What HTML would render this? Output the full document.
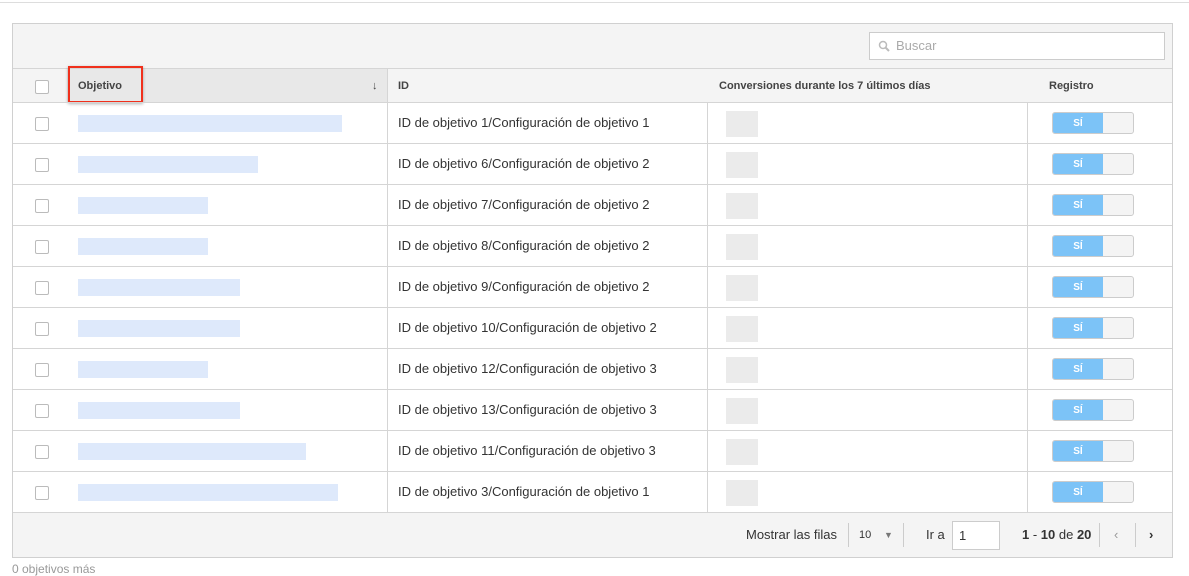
<!DOCTYPE html><html><head><style>
body{margin:0;width:1189px;height:572px;overflow:hidden;background:#fff;font-family:"Liberation Sans",sans-serif;position:relative}
.a{position:absolute}
.tbl{left:12px;top:23px;width:1159px;height:533px;border:1px solid #d0d0d0;background:#fff}
.row{position:absolute;left:0;width:1159px;height:40px;border-top:1px solid #d5d5d5;font-size:13px;color:#333}
.cb{position:absolute;left:22px;width:12px;height:12px;border:1px solid #bbb;border-radius:2px;background:#fff}
.vl{position:absolute;top:0;bottom:0;width:1px;background:#d5d5d5}
.tg{position:absolute;left:1039px;top:9px;width:80px;height:20px;border:1px solid #ccc;border-radius:3px;background:#f4f4f4;overflow:hidden}
.tg b{display:block;width:50px;height:20px;background:#7cc3f7;color:#fff;font-size:10px;text-align:center;line-height:21px}
.bl{position:absolute;background:#d6e3fa}
.gr{position:absolute;background:#e6e6e6}
</style></head><body>
<div class="a" style="left:0;top:2px;width:1189px;height:1px;background:#ddd"></div>
<div class="a tbl">
 <div class="a" style="left:0;top:0;width:1159px;height:44px;background:#f4f4f4"></div>
 <div class="a" style="left:856px;top:8px;width:294px;height:26px;border:1px solid #ccc;background:#fff;font-size:13px;color:#aaa;line-height:26px">
  <svg class="a" style="left:8px;top:7px" width="12" height="12" viewBox="0 0 12 12"><circle cx="5" cy="5" r="3.5" fill="none" stroke="#bbb" stroke-width="1.5"/><path d="M7.5 7.5L11 11" stroke="#bbb" stroke-width="2"/></svg>
  <span style="position:absolute;left:26px">Buscar</span></div>
 <div class="row" style="top:44px;height:33px;background:#f4f4f4;font-size:11px;font-weight:bold;color:#444;line-height:35px">
  <div class="cb" style="top:11px"></div>
  <div class="a" style="left:54px;top:0;width:320px;height:33px;background:#e8e8e8"></div>
  <span class="a" style="left:65px">Objetivo</span><span class="a" style="left:359px">↓</span>
  <div class="vl" style="left:374px"></div>
  <span class="a" style="left:385px">ID</span>
  <span class="a" style="left:706px">Conversiones durante los 7 últimos días</span>
  <span class="a" style="left:1036px">Registro</span>
 </div>
 <div class="a" style="left:55px;top:42px;width:71px;height:33px;border:2px solid #f0301c;box-shadow:0 1px 3px rgba(0,0,0,.3)"></div>
 <div id="rows"></div>
 <div class="row" style="top:488px;height:44px;background:#f4f4f4;font-size:13px;line-height:44px">
  <span class="a" style="left:733px">Mostrar las filas</span>
  <div class="vl" style="left:835px;top:10px;bottom:10px;background:#ccc"></div>
  <span class="a" style="left:846px;font-size:11px">10</span><span class="a" style="left:871px;font-size:9px;color:#777">▼</span>
  <div class="vl" style="left:890px;top:10px;bottom:10px;background:#ccc"></div>
  <span class="a" style="left:913px">Ir a</span>
  <div class="a" style="left:939px;top:8px;width:46px;height:27px;border:1px solid #ccc;background:#fff;line-height:27px;text-indent:6px">1</div>
  <span class="a" style="left:1009px"><b>1</b> - <b>10</b> de <b>20</b></span>
  <div class="vl" style="left:1086px;top:10px;bottom:10px;background:#ccc"></div>
  <span class="a" style="left:1101px;color:#999">‹</span>
  <div class="vl" style="left:1122px;top:10px;bottom:10px;background:#ccc"></div>
  <span class="a" style="left:1136px;font-weight:bold">›</span>
 </div>
</div>
<div class="a" style="left:12px;top:562px;font-size:12px;color:#999">0 objetivos más</div>
<script>
var ids=["1/Configuración de objetivo 1","6/Configuración de objetivo 2","7/Configuración de objetivo 2","8/Configuración de objetivo 2","9/Configuración de objetivo 2","10/Configuración de objetivo 2","12/Configuración de objetivo 3","13/Configuración de objetivo 3","11/Configuración de objetivo 3","3/Configuración de objetivo 1"];
var w=[264,180,130,130,162,162,130,162,228,260],h="";
for(var i=0;i<10;i++){var t=78+i*41;
h+='<div class="row" style="top:'+t+'px"><div class="cb" style="top:14px"></div><div class="vl" style="left:374px"></div><div class="vl" style="left:694px"></div><div class="vl" style="left:1014px"></div>'+
'<div class="bl" style="left:65px;top:12px;width:'+w[i]+'px;height:17px;opacity:.8"></div>'+
'<span class="a" style="left:385px;top:12px">ID de objetivo '+ids[i]+'</span>'+
'<div class="gr" style="left:713px;top:8px;width:32px;height:26px;opacity:.8"></div>'+
'<div class="tg"><b>SÍ</b></div></div>';}
document.getElementById("rows").innerHTML=h;
</script>
</body></html>
